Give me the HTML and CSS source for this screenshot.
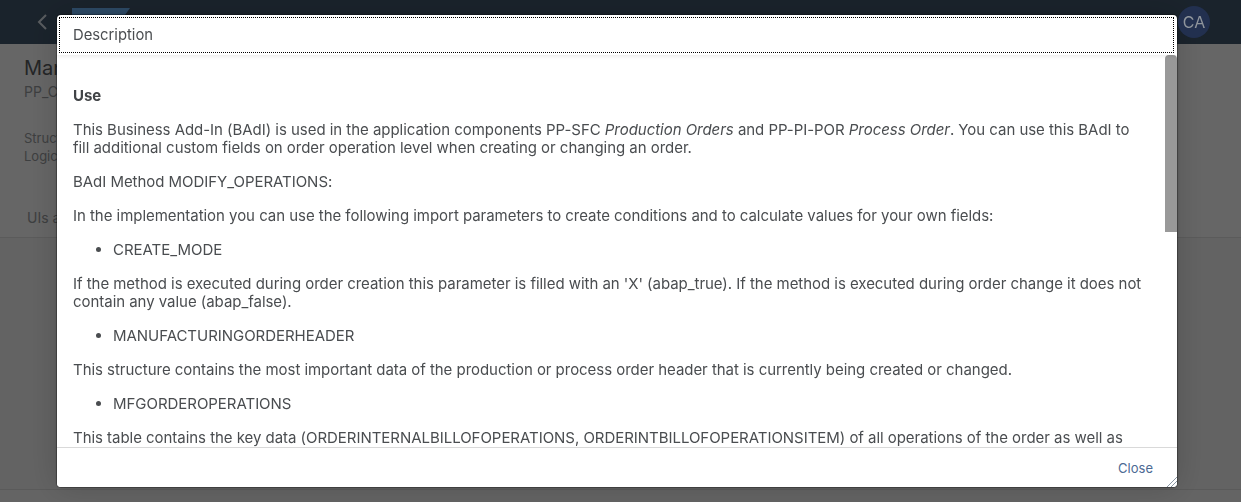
FILE: index.html
```html
<!DOCTYPE html>
<html lang="en">
<head>
<meta charset="utf-8">
<title>Description</title>
<link rel="stylesheet" href="styles.css">
</head>
<body>
<div class="page">
  <header class="shell">
    <svg class="back" viewBox="0 0 12 18" width="12" height="18"><path d="M10 2 L3 9 L10 16" fill="none" stroke="#dfe6ee" stroke-width="2"/></svg>
    <div class="logo"></div>
    <div class="spacer"></div>
    <div class="avatar">CA</div>
  </header>
  <section class="object-head">
    <h1 class="object-title">Manage</h1>
    <div class="object-sub">PP_CO</div>
    <div class="meta">
      <div>Structure</div>
      <div>Logical</div>
    </div>
    <div class="tab">UIs and</div>
  </section>
  <div class="page-body"></div>
  <div class="page-foot"></div>
</div>
<div class="scrim"></div>
<div class="dialog" role="dialog">
  <div class="dialog-head"><div class="dialog-title">Description</div></div>
  <div class="dialog-content">
    <div class="doc">
      <p class="doc-heading">Use</p>
      <p>This Business Add-In (BAdI) is used in the application components PP-SFC <em>Production Orders</em> and PP-PI-POR <em>Process Order</em>. You can use this BAdI to fill additional custom fields on order operation level when creating or changing an order.</p>
      <p>BAdI Method MODIFY_OPERATIONS:</p>
      <p>In the implementation you can use the following import parameters to create conditions and to calculate values for your own fields:</p>
      <ul><li>CREATE_MODE</li></ul>
      <p>If the method is executed during order creation this parameter is filled with an 'X' (abap_true). If the method is executed during order change it does not contain any value (abap_false).</p>
      <ul><li>MANUFACTURINGORDERHEADER</li></ul>
      <p>This structure contains the most important data of the production or process order header that is currently being created or changed.</p>
      <ul><li>MFGORDEROPERATIONS</li></ul>
      <p>This table contains the key data (ORDERINTERNALBILLOFOPERATIONS, ORDERINTBILLOFOPERATIONSITEM) of all operations of the order as well as</p>
    </div>
    <div class="scrollbar"><div class="thumb"></div></div>
  </div>
  <div class="dialog-foot"><span class="close">Close</span></div>
  <svg class="grip" viewBox="0 0 10 10" width="10" height="10"><path d="M0 10 L10 0 M4 10 L10 4 M8 10 L10 8" stroke="#8a97a5" stroke-width="1" fill="none"/></svg>
</div>
</body>
</html>
```
FILE: styles.css
```css
* { box-sizing: border-box; }
html, body { margin: 0; height: 100%; overflow: hidden; }
body { font-family: "Inter", "Noto Sans", sans-serif; font-size: 15px; color: #32363a; background: #fafafa; }

.page { height: 502px; display: flex; flex-direction: column; }
.shell { height: 44px; background: #42586e; display: flex; align-items: center; padding-left: 36px; padding-right: 31px; }
.back { display: block; }
.logo { width: 58px; height: 21px; margin-left: 24px; background: #70b9ff; clip-path: polygon(0 0, 100% 0, 74% 100%, 0 100%); align-self: flex-start; margin-top: 8px; }
.spacer { flex: 1; }
.avatar { position: relative; z-index: 1; width: 32px; height: 32px; border-radius: 50%; background: #22304f; color: #8f959c; font-size: 16px; display: flex; align-items: center; justify-content: center; }

.object-head { height: 194px; padding: 13px 24px 0; background: #fff; border-bottom: 1px solid #e4e4e4; color: #9a9da0; }
.object-title { margin: 0; font-size: 20px; font-weight: 400; line-height: 22px; color: #5a5d60; }
.object-sub { font-size: 14px; line-height: 18px; margin-top: 4px; }
.meta { margin-top: 28px; font-size: 13px; line-height: 18px; }
.tab { margin-top: 44px; margin-left: 3px; font-size: 14px; line-height: 18px; }
.page-body { flex: 1; background: #f7f7f7; }
.page-foot { height: 13px; flex: none; border-top: 1px solid #e0e0e0; background: #fafafa; }

.scrim { position: fixed; inset: 0; background: rgba(0,0,0,.6); }

.dialog { position: fixed; left: 57px; top: 15px; width: 1120px; height: 472px; background: #fff; border-radius: 4px; display: flex; flex-direction: column; overflow: hidden; box-shadow: 0 0 1px 1px rgba(0,0,0,.35), 0 0 32px rgba(0,0,0,.18); }
.dialog-head { height: 40px; padding: 2px 3px 2px 2px; box-shadow: 0 2px 4px rgba(0,0,0,.08); position: relative; z-index: 1; }
.dialog-title { height: 36px; border: 1px dotted #000; padding-left: 13px; line-height: 35px; font-size: 14.8px; color: #4a4d50; }
.dialog-content { flex: 1; min-height: 0; display: flex; position: relative; overflow: hidden; }
.doc { flex: 1; min-width: 0; padding: 32px 20px 0 16px; line-height: 18px; font-size: 15px; letter-spacing: -.04px; color: #4a4d50; }
.doc p { margin: 0 0 16px; }
.doc .doc-heading { font-weight: 700; margin-bottom: 16px; color: #414447; }
.doc ul { margin: 0 0 16px; padding-left: 40px; }
.scrollbar { width: 12px; flex: none; }
.thumb { height: 177px; background: #999; border-radius: 4px 4px 0 0; }
.dialog-foot { height: 40px; flex: none; border-top: 1px solid #d9d9d9; display: flex; justify-content: flex-end; align-items: center; padding-right: 24px; background: #fff; }
.close { color: #4c6a94; font-size: 13px; }
.grip { position: absolute; right: 0; bottom: 0; }
```
